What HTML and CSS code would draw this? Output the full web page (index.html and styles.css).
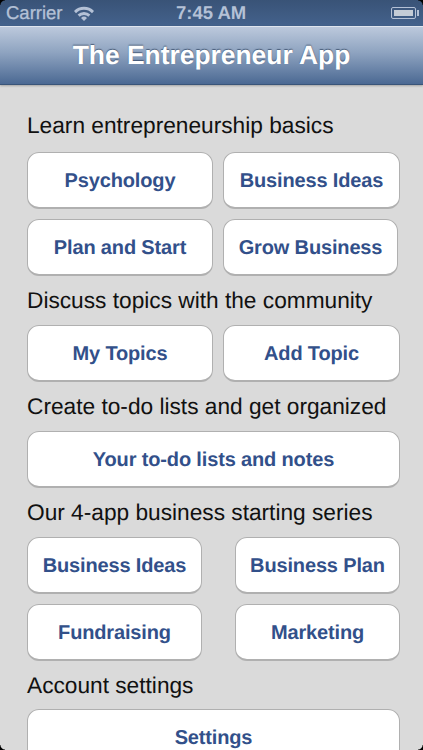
FILE: index.html
```html
<!DOCTYPE html>
<html lang="en">
<head>
<meta charset="UTF-8">
<meta name="viewport" content="width=device-width, initial-scale=1.0">
<title>The Entrepreneur App</title>
<link rel="stylesheet" href="styles.css">
</head>
<body>
<div class="phone">
  <div class="status-bar">
    <div class="status-left">
      <span>Carrier</span>
      <svg class="wifi" width="22" height="16" viewBox="0 0 22 16">
        <path d="M1 6 A14 14 0 0 1 21 6 L19 8.2 A11 11 0 0 0 3 8.2 Z" fill="#b4c1d6"/>
        <path d="M4.6 9.6 A9 9 0 0 1 17.4 9.6 L15.4 11.8 A6 6 0 0 0 6.6 11.8 Z" fill="#b4c1d6"/>
        <path d="M8 13 A4.4 4.4 0 0 1 14 13 L11 16 Z" fill="#b4c1d6"/>
      </svg>
    </div>
    <span class="status-time">7:45 AM</span>
    <div class="battery"><div class="battery-fill"></div></div>
  </div>
  <header class="nav-bar">
    <h1>The Entrepreneur App</h1>
  </header>
  <main class="content">
    <p class="label first">Learn entrepreneurship basics</p>
    <div class="row w-a">
      <a class="btn">Psychology</a>
      <a class="btn">Business Ideas</a>
    </div>
    <div class="row w-b">
      <a class="btn">Plan and Start</a>
      <a class="btn">Grow Business</a>
    </div>
    <p class="label">Discuss topics with the community</p>
    <div class="row w-a">
      <a class="btn">My Topics</a>
      <a class="btn">Add Topic</a>
    </div>
    <p class="label">Create to-do lists and get organized</p>
    <div class="row">
      <a class="btn wide">Your to-do lists and notes</a>
    </div>
    <p class="label">Our 4-app business starting series</p>
    <div class="row w-c">
      <a class="btn">Business Ideas</a>
      <a class="btn">Business Plan</a>
    </div>
    <div class="row w-c">
      <a class="btn">Fundraising</a>
      <a class="btn">Marketing</a>
    </div>
    <p class="label last">Account settings</p>
    <div class="row">
      <a class="btn wide">Settings</a>
    </div>
  </main>
  <div class="corner tl"></div>
  <div class="corner tr"></div>
  <div class="corner bl"></div>
  <div class="corner br"></div>
</div>
</body>
</html>
```
FILE: styles.css
```css
html, body {
  margin: 0;
  padding: 0;
}

body {
  font-family: "Liberation Sans", Arial, sans-serif;
  background-color: #dadada;
  text-rendering: geometricPrecision;
}

.phone {
  position: relative;
  width: 423px;
  height: 750px;
  overflow: hidden;
  background-color: #dadada;
}

.status-bar {
  display: flex;
  align-items: center;
  height: 26px;
  padding: 0 5px 0 6px;
  background: linear-gradient(#395377, #44628c);
  color: #b4c1d6;
  font-size: 18.5px;
  font-weight: bold;
}

.status-left {
  display: flex;
  align-items: center;
  gap: 10px;
  width: 170px;
}

.status-left span {
  font-weight: normal;
  -webkit-text-stroke: 0.3px #b4c1d6;
}

.status-time {
  flex: 1;
}

.battery {
  position: relative;
  box-sizing: border-box;
  width: 25px;
  height: 12px;
  margin-right: 2px;
  padding: 2px;
  border: 1px solid #b4c1d6;
  border-radius: 2px;
}

.battery::after {
  content: "";
  position: absolute;
  top: 2px;
  right: -4px;
  width: 2px;
  height: 6px;
  background-color: #b4c1d6;
}

.battery-fill {
  height: 100%;
  background-color: #c4ccd6;
}

.nav-bar {
  display: flex;
  align-items: center;
  justify-content: center;
  height: 57px;
  border-top: 1px solid #dfe5ee;
  border-bottom: 1px solid #3a5579;
  background: linear-gradient(#bcc9dc, #8ea3c0 45%, #4b6993);
  box-shadow: 0 1px 2px rgba(0, 0, 0, 0.25);
}

.nav-bar h1 {
  margin: 0;
  color: #fff;
  font-size: 26.4px;
  font-weight: bold;
  text-shadow: 0 -1px 1px rgba(40, 60, 90, 0.7);
}

.content {
  padding: 0 23px 0 27px;
}

.label {
  margin: 0;
  height: 49px;
  line-height: 49px;
  color: #111;
  font-size: 22.7px;
}

.label.first {
  height: 67px;
  line-height: 80px;
}

.label.last {
  height: 48px;
  line-height: 48px;
}

.row {
  display: flex;
  justify-content: space-between;
  margin-bottom: 10px;
}

.row:has(+ .label) {
  margin-bottom: 0;
}

.btn {
  display: flex;
  align-items: center;
  justify-content: center;
  box-sizing: border-box;
  height: 57px;
  padding-top: 2px;
  border: 1px solid #b0b0b0;
  border-bottom-width: 2px;
  border-radius: 12px;
  background-color: #fff;
  color: #32508a;
  font-size: 20px;
  font-weight: bold;
  letter-spacing: -0.15px;
}

.btn.wide {
  width: 100%;
}

.w-a .btn:first-child,
.w-b .btn:first-child {
  width: 186px;
}

.w-a .btn:last-child {
  width: 177px;
}

.w-b {
  justify-content: flex-start;
  gap: 10px;
}

.w-b .btn:last-child {
  width: 175px;
}

.w-c .btn:first-child {
  width: 175px;
}

.w-c .btn:last-child {
  width: 165px;
}

.corner {
  position: absolute;
  width: 5px;
  height: 5px;
  background: radial-gradient(circle at var(--cx) var(--cy), transparent 4px, #000 5px);
}

.tl { top: 0; left: 0; --cx: 100%; --cy: 100%; }
.tr { top: 0; right: 0; --cx: 0; --cy: 100%; }
.bl { bottom: 0; left: 0; --cx: 100%; --cy: 0; }
.br { bottom: 0; right: 0; --cx: 0; --cy: 0; }
```
